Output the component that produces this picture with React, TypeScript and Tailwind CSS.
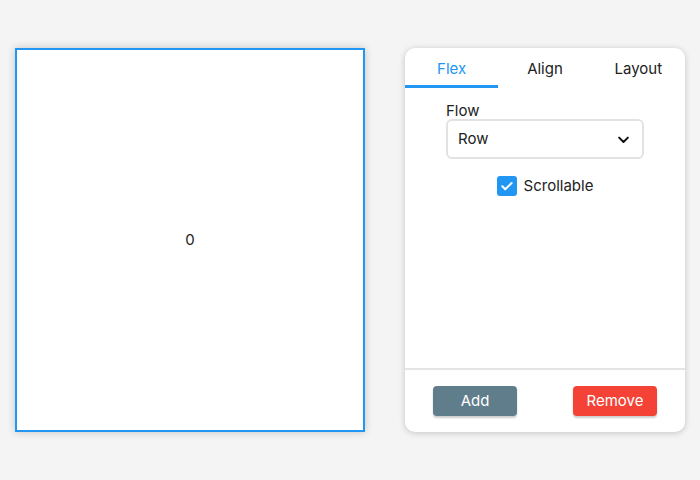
import React, { useState } from "react";

const tabs = ["Flex", "Align", "Layout"];

export default function App() {
  const [tab, setTab] = useState("Flex");
  const [scrollable, setScrollable] = useState(true);

  return (
    <div
      className="flex h-screen w-full items-center gap-10 bg-[#f4f4f4] px-[15px]"
      style={{ fontFamily: "Inter, 'Noto Sans', sans-serif" }}
    >
      <div className="flex h-[384px] w-[350px] items-center justify-center border-2 border-[#2196f3] bg-white text-[15px] text-[#222] shadow-[0_0_8px_rgba(0,0,0,0.2)]">
        0
      </div>

      <div className="flex h-[384px] w-[280px] flex-col overflow-hidden rounded-[10px] bg-white shadow-[0_1px_6px_rgba(0,0,0,0.2)]">
        <div className="grid h-10 grid-cols-3">
          {tabs.map((t) => (
            <button
              key={t}
              onClick={() => setTab(t)}
              className={
                "flex items-center justify-center border-b-[3px] pt-[5px] text-[15px] " +
                (tab === t ? "border-[#2196f3] text-[#2196f3]" : "border-transparent text-[#222]")
              }
            >
              {t}
            </button>
          ))}
        </div>

        <div className="flex flex-1 flex-col items-center pt-[15px]">
          <div className="w-[198px]">
            <div className="text-[15px] leading-[16px] text-[#222]">Flow</div>
            <div className="flex h-[40px] items-center justify-between rounded-[6px] border-2 border-[#e2e2e2] pl-[10px] pr-[11px] pt-[1px] text-[15px] text-[#222]">
              <span>Row</span>
              <svg width="15" height="15" viewBox="0 0 24 24" fill="none" stroke="#111" strokeWidth="3.2" strokeLinecap="round" strokeLinejoin="round">
                <path d="M5 9l7 7 7-7" />
              </svg>
            </div>
          </div>

          <label className="mt-[16px] flex cursor-pointer items-center gap-[7px] text-[15px] text-[#222]">
            <span
              onClick={() => setScrollable(!scrollable)}
              className={
                "flex h-5 w-5 items-center justify-center rounded-[3px] " +
                (scrollable ? "bg-[#2196f3]" : "border-2 border-[#999] bg-white")
              }
            >
              {scrollable && (
                <svg width="14" height="14" viewBox="0 0 24 24" fill="none" stroke="white" strokeWidth="3.5" strokeLinecap="round" strokeLinejoin="round">
                  <path d="M4 12.5l5 5L20 7" />
                </svg>
              )}
            </span>
            Scrollable
          </label>
        </div>

        <div className="flex h-[64px] items-center justify-between border-t-2 border-[#e4e4e4] px-7">
          <button className="h-[30px] w-[84px] rounded-[4px] bg-[#607d8b] text-[15px] text-white shadow-[0_2px_2px_rgba(0,0,0,0.2)]">
            Add
          </button>
          <button className="h-[30px] w-[84px] rounded-[4px] bg-[#f44336] text-[15px] text-white shadow-[0_2px_2px_rgba(0,0,0,0.2)]">
            Remove
          </button>
        </div>
      </div>
    </div>
  );
}
